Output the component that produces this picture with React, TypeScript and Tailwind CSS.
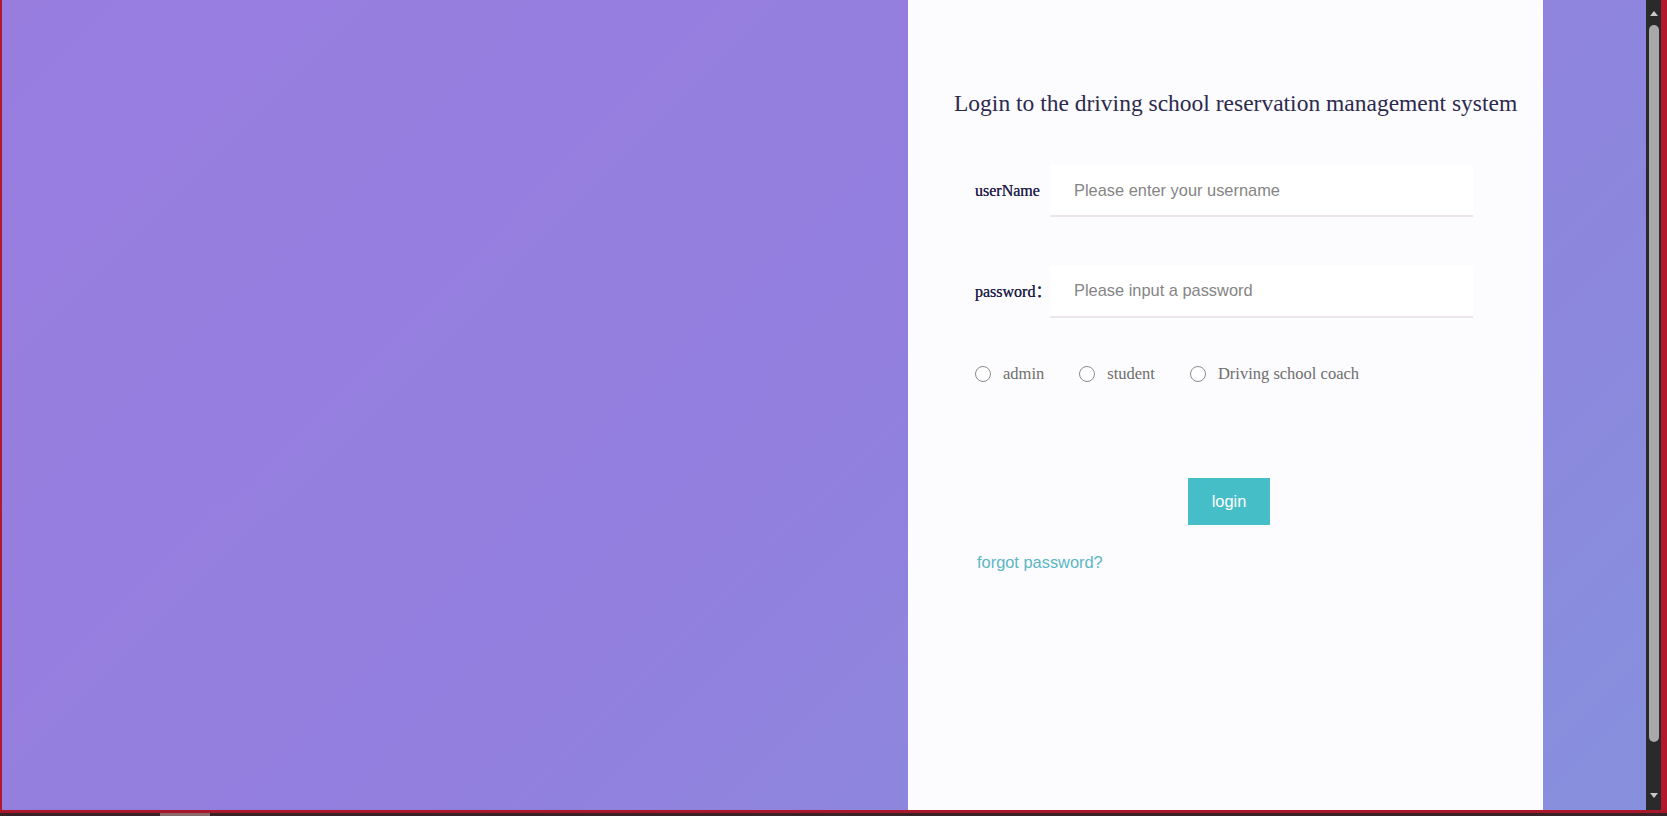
import React from "react";

const serif = { fontFamily: '"Liberation Serif", "Noto Sans CJK SC", serif' };

function Radio({ label }: { label: string }) {
  return (
    <label className="flex items-center gap-[12px] cursor-pointer">
      <span className="w-[16px] h-[16px] rounded-full border border-[#8c8c8c] bg-white" />
      <span className="text-[16.5px] leading-[20px] text-[#6e6e6e] font-['Liberation_Serif',serif]">{label}</span>
    </label>
  );
}

export default function App() {
  return (
    <div className="w-[1667px] h-[816px] bg-[#b3182c] flex flex-col overflow-hidden">
      <div className="flex h-[810px] pl-[2px]">
        <div className="w-[1644px] h-full flex justify-end pr-[103px] bg-[linear-gradient(135deg,#987ddf_0%,#927fde_50%,#8790dd_100%)]">
          <div className="w-[635px] h-full bg-[#fcfbfd] flex flex-col pt-[88px]">
            <h1 className="pl-[46px] text-[23.5px] leading-[30px] text-[#2c2a4e] font-['Liberation_Serif',serif]">
              Login to the driving school reservation management system
            </h1>

            <div className="mt-[47px] pl-[67px] flex items-center">
              <span className="w-[75px] text-[16px] text-[#25234a] [text-shadow:0_0_0.4px_#25234a]" style={serif}>userName</span>
              <div className="w-[423px] h-[52px] bg-white border-b-2 border-[#ece5eb] flex items-center pl-[24px]">
                <input
                  className="w-full outline-none bg-transparent text-[16.4px] text-[#555] placeholder:text-[#858585] font-['Liberation_Sans',Arial,sans-serif]"
                  placeholder="Please enter your username"
                />
              </div>
            </div>

            <div className="mt-[48px] pl-[67px] flex items-center">
              <span className="w-[75px] text-[16px] text-[#25234a] [text-shadow:0_0_0.4px_#25234a]" style={serif}>password：</span>
              <div className="w-[423px] h-[53px] bg-white border-b-2 border-[#ece5eb] flex items-center pl-[24px]">
                <input
                  type="password"
                  className="w-full outline-none bg-transparent text-[16.4px] text-[#555] placeholder:text-[#858585] font-['Liberation_Sans',Arial,sans-serif]"
                  placeholder="Please input a password"
                />
              </div>
            </div>

            <div className="mt-[46px] pl-[67px] flex items-center gap-[35px]">
              <Radio label="admin" />
              <Radio label="student" />
              <Radio label="Driving school coach" />
            </div>

            <div className="mt-[94px] pl-[280px] flex">
              <button className="w-[82px] h-[47px] bg-[#46bec8] text-white text-[16.4px] font-['Liberation_Sans',Arial,sans-serif]">
                login
              </button>
            </div>

            <div className="mt-[25px] pl-[69px]">
              <a className="text-[16.4px] leading-[20px] text-[#5bb7c3] font-['Liberation_Sans',Arial,sans-serif] cursor-pointer">
                forgot password?
              </a>
            </div>
          </div>
        </div>
        <div className="w-[15px] h-full bg-[#2a2a2a] flex flex-col items-center">
          <svg width="10" height="8" viewBox="0 0 10 8" className="mt-[9px]">
            <path d="M1 7 L5 2 L9 7 Z" fill="#c8c8c8" />
          </svg>
          <div className="mt-[8px] w-[10px] flex-1 rounded-full bg-[#a8a8a8]" />
          <div className="h-[68px] flex flex-col justify-end pb-[10px]">
            <svg width="10" height="8" viewBox="0 0 10 8">
              <path d="M1 1 L9 1 L5 6 Z" fill="#c8c8c8" />
            </svg>
          </div>
        </div>
      </div>
      <div className="h-[3px] bg-[#a8182a]" />
      <div className="h-[3px] bg-[#3a2326] flex">
        <div className="ml-[160px] w-[50px] h-full bg-[#8a6a6a]" />
      </div>
    </div>
  );
}
